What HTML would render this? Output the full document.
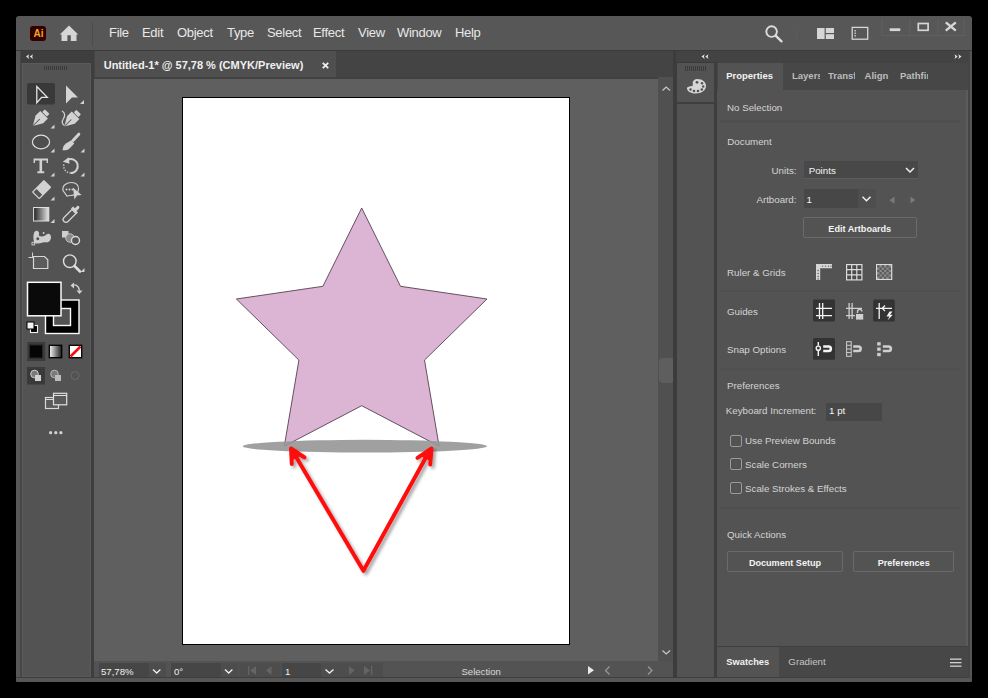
<!DOCTYPE html>
<html><head><meta charset="utf-8">
<style>
*{margin:0;padding:0;box-sizing:border-box}
html,body{width:988px;height:698px;overflow:hidden;background:#000}
body{position:relative;font-family:"Liberation Sans",sans-serif;color:#ddd}
.a{position:absolute}
svg{position:absolute;overflow:visible}
.win{left:16px;top:16px;width:956px;height:666px;background:#575757;border-radius:3px 3px 1px 1px;overflow:hidden}
.mt{font-size:13px;color:#e8e8e8;top:25px;line-height:15px;letter-spacing:-0.3px}
.pt{font-size:10px;color:#d6d6d6;line-height:12px}
.btn{border:1px solid #6a6a6a;background:#535353;border-radius:2px;font-size:10px;color:#f0f0f0;text-align:center;line-height:19px}
.tri{width:0;height:0;border-left:4px solid transparent;border-bottom:4px solid #d0d0d0}
.cb{width:12px;height:12px;border:1px solid #9a9a9a;border-radius:2px}
</style></head><body>
<div class="a win"></div>

<!-- MENU BAR -->
<div class="a" style="left:16px;top:50px;width:956px;height:1px;background:#3a3a3a"></div>

<!-- Ai logo -->
<div class="a" style="left:30px;top:26px;width:16px;height:14.5px;background:#330000;border-radius:3px"></div>
<div class="a" style="left:31px;top:27px;width:15px;height:13px;font-size:10px;line-height:13px;font-weight:bold;color:#f5a623;text-align:center">Ai</div>
<!-- home icon -->
<svg style="left:59px;top:24px" width="20" height="18" viewBox="0 0 20 18"><path d="M10 1.5 L19.2 10.5 L17.5 10.5 L17.5 17 L11.8 17 L11.8 11.2 L8.4 11.2 L8.4 17 L2.5 17 L2.5 10.5 L0.8 10.5 Z" fill="#d6d6d6"/></svg>
<div class="a" style="left:92px;top:22px;width:1px;height:24px;background:#4c4c4c"></div>

<div class="a mt" style="left:109px">File</div>
<div class="a mt" style="left:142px">Edit</div>
<div class="a mt" style="left:177px">Object</div>
<div class="a mt" style="left:227px">Type</div>
<div class="a mt" style="left:267px">Select</div>
<div class="a mt" style="left:313px">Effect</div>
<div class="a mt" style="left:358px">View</div>
<div class="a mt" style="left:397px">Window</div>
<div class="a mt" style="left:455px">Help</div>

<!-- TOOLBAR FRAME -->
<div class="a" style="left:20px;top:51px;width:74px;height:627px;background:#474747"></div>
<div class="a" style="left:21px;top:51px;width:72px;height:12px;background:#3e3e3e"></div>
<div class="a" style="left:22px;top:63px;width:69px;height:614px;background:#5a5a5a"></div>
<div class="a" style="left:23px;top:64px;width:67px;height:612px;background:#535353"></div>
<div class="a" style="left:91px;top:51px;width:3px;height:627px;background:#3e3e3e"></div>


<!-- TOOL ICONS -->
<svg style="left:0;top:0" width="988" height="698">
<g fill="#d2d2d2">
<!-- toolbar header chevrons -->
<path d="M26 56.6 L29.2 54.2 L28.4 56.6 L29.2 59 Z M29.8 56.6 L33 54.2 L32.2 56.6 L33 59 Z" fill="#e4e4e4"/>
<!-- gripper -->
<g fill="#3a3a3a"><rect x="44" y="66" width="1" height="4"/><rect x="46" y="66" width="1" height="4"/><rect x="48" y="66" width="1" height="4"/><rect x="50" y="66" width="1" height="4"/><rect x="52" y="66" width="1" height="4"/><rect x="54" y="66" width="1" height="4"/><rect x="56" y="66" width="1" height="4"/><rect x="58" y="66" width="1" height="4"/><rect x="60" y="66" width="1" height="4"/><rect x="62" y="66" width="1" height="4"/><rect x="64" y="66" width="1" height="4"/><rect x="66" y="66" width="1" height="4"/></g>
<!-- row1 -->
<rect x="27" y="83" width="28" height="21.5" rx="2" fill="#393939"/>
<path d="M36.8 86.5 L47.3 97.3 L41.6 97.3 L36.8 102.8 Z" fill="none" stroke="#e4e4e4" stroke-width="1.3" stroke-linejoin="miter"/>
<path d="M66 85.5 L78 97.5 L72 97.5 L66 103.5 Z" fill="#d4d4d4"/>
<path d="M84 100 L84 104 L80 104 Z"/>
<!-- row2 pen -->
<g transform="translate(39.8 119) rotate(45) scale(1.1)"><rect x="-3" y="-9.5" width="6" height="3.4" rx="0.8"/><path d="M-4.9 -5.5 L4.9 -5.5 L4.9 0.5 L0 9 L-4.9 0.5 Z"/><path d="M0 0 L0 9" stroke="#535353" stroke-width="0.9"/></g>
<path d="M54.5 124.5 L54.5 128.5 L50.5 128.5 Z"/>
<g transform="translate(71.3 119.5) rotate(45) scale(1.1)"><rect x="-3" y="-9.5" width="6" height="3.4" rx="0.8"/><path d="M-4.9 -5.5 L4.9 -5.5 L4.9 0.5 L0 9 L-4.9 0.5 Z"/><path d="M0 0 L0 9" stroke="#535353" stroke-width="0.9"/></g>
<path d="M62 111 C65.5 113 65 116 63.5 118.5 C61.5 121.5 62 124.5 64.5 125.5" fill="none" stroke="#d2d2d2" stroke-width="1.3"/>
<!-- row3 ellipse -->
<ellipse cx="41" cy="142" rx="8.6" ry="6.8" fill="#4e4e4e" stroke="#dedede" stroke-width="1.2"/>
<path d="M54.5 148.5 L54.5 152.5 L50.5 152.5 Z"/>
<!-- brush -->
<path d="M78.8 134.2 L73 140.5" stroke="#d2d2d2" stroke-width="3" stroke-linecap="round"/>
<path d="M71.2 140.3 L74.3 143.4 L69.5 148.5 C67.5 150.3 64.5 150.5 62.5 150.3 C62.7 148 63.5 145.5 65.5 143.8 Z"/>
<path d="M84.5 148.5 L84.5 152.5 L80.5 152.5 Z"/>
<!-- row4 T -->
<path d="M33.6 158.6 H48 V163 H46.6 V160.6 H42.1 V171.3 H44.2 V173.2 H37.4 V171.3 H39.5 V160.6 H35 V163 H33.6 Z"/>
<path d="M54.5 172.5 L54.5 176.5 L50.5 176.5 Z"/>
<!-- rotate -->
<path d="M67.5 159.8 A7 7 0 1 1 70.8 173" fill="none" stroke="#d2d2d2" stroke-width="2"/>
<path d="M70.8 173 A7 7 0 0 1 64 164" fill="none" stroke="#d2d2d2" stroke-width="1.6" stroke-dasharray="1.3 1.5"/>
<path d="M62.8 161.8 L68.8 157.2 L69.5 163.8 Z"/>
<path d="M84.5 172.5 L84.5 176.5 L80.5 176.5 Z"/>
<!-- row5 eraser -->
<g transform="translate(41.6 189.6) rotate(45)"><rect x="-5.3" y="-8.6" width="10.6" height="17.2" rx="1" fill="#d2d2d2"/><rect x="-4" y="3.2" width="8" height="4.2" fill="#555"/></g>
<path d="M54.5 196.5 L54.5 200.5 L50.5 200.5 Z"/>
<!-- shaper -->
<path d="M63 190.5 C62 185 67 182.5 71.5 182.5 C76 182.5 79 185 78.5 189.5 C78 194 74 195.5 70 195.5 L67 196 Z" fill="none" stroke="#d2d2d2" stroke-width="1.2"/>
<circle cx="66.5" cy="189.5" r="1"/><circle cx="69.5" cy="189.5" r="1"/><circle cx="72.5" cy="189.5" r="1"/>
<path d="M73 187.5 L81.6 195 L77 195.5 L74.5 199.5 Z"/>
<!-- row6 gradient -->
<defs><linearGradient id="g1" x1="0" x2="1"><stop offset="0" stop-color="#222"/><stop offset="1" stop-color="#e8e8e8"/></linearGradient>
<linearGradient id="g2" x1="0" x2="1"><stop offset="0" stop-color="#fafafa"/><stop offset="1" stop-color="#1a1a1a"/></linearGradient></defs>
<rect x="33.6" y="207.5" width="15.2" height="13.5" fill="url(#g1)" stroke="#e0e0e0" stroke-width="1"/>
<path d="M54.5 219 L54.5 223 L50.5 223 Z"/>
<!-- eyedropper -->
<path d="M64 221.5 C62.5 220 63 218.5 64 217.5 L72 209.5 L76 213.5 L68 221.5 C67 222.5 65.5 223 64 221.5 Z" fill="none" stroke="#d2d2d2" stroke-width="1.3"/>
<path d="M71 208.5 L76.5 214 L78 212.5 L76.5 211 L79 208.5 C80 207.5 79 205.5 77.5 205.8 L75 208.3 L73 206.5 Z"/>
<!-- row7 puppet warp -->
<path d="M34.2 243 C33 238 33 232 35.8 231 C38.5 230.2 39.8 233 38.8 235.8 C41.5 237 44.5 236.5 46.5 234.5 C48.5 232.8 51.2 234 51 237.5 C50.8 241 48.5 243 45.5 242.3 C42.5 241.8 40.5 243.5 38 243.5 C36.5 243.5 35 243.5 34.2 243 Z" fill="#cfcfcf"/>
<path d="M39.5 232 L42 235" stroke="#535353" stroke-width="0.8"/>
<circle cx="43.6" cy="233" r="1" fill="#cfcfcf"/>
<circle cx="37.8" cy="238.8" r="2" fill="#535353" stroke="#d2d2d2" stroke-width="1"/>
<path d="M34.5 242 L36.5 240" stroke="#cfcfcf" stroke-width="0.9"/>
<rect x="32" y="242.3" width="2.6" height="2.6" fill="#535353" stroke="#d2d2d2" stroke-width="0.9"/>
<!-- shape builder -->
<rect x="62" y="231" width="6.5" height="6.5" fill="#cfcfcf"/>
<circle cx="70" cy="238" r="4.3" fill="#8a8a8a" stroke="#d2d2d2" stroke-width="0.8"/>
<circle cx="75.5" cy="240.5" r="4" fill="#535353" stroke="#dcdcdc" stroke-width="1.4"/>
<!-- row8 artboard -->
<path d="M28.5 257.5 H34 M32.5 252.5 V258" stroke="#cfcfcf" stroke-width="1" fill="none"/>
<path d="M33.5 256.5 H44.5 L47.8 259.8 V268.5 H33.5 Z" fill="#5c5c5c" stroke="#d8d8d8" stroke-width="1.2"/>
<!-- zoom -->
<circle cx="69.8" cy="261.2" r="6.3" fill="none" stroke="#dcdcdc" stroke-width="1.4"/>
<path d="M74.5 266 L80 271.5" stroke="#dcdcdc" stroke-width="2.6" stroke-linecap="round"/>
<path d="M84.5 268 L84.5 272 L80.5 272 Z"/>
<!-- fill stroke -->
<rect x="45.5" y="300" width="33.5" height="33.5" fill="#000" stroke="#fafafa" stroke-width="1.4"/>
<rect x="53.5" y="308.5" width="17" height="17" fill="#535353" stroke="#fafafa" stroke-width="1.4"/>
<rect x="27.5" y="282.3" width="33.5" height="33.5" fill="#0a0a0a" stroke="#fafafa" stroke-width="1.5"/>
<path d="M72 285.5 C75 284 78.5 285 79.5 290.5" fill="none" stroke="#cfcfcf" stroke-width="1.4"/>
<path d="M70.5 285.5 L74 282.5 L74 288.5 Z M79.5 294 L76.5 290.5 L82.5 290.5 Z"/>
<rect x="30.5" y="325.5" width="7" height="7" fill="#000" stroke="#f0f0f0" stroke-width="1.1"/>
<rect x="27" y="322" width="7" height="7" fill="#f4f4f4" stroke="#000" stroke-width="1"/>
<!-- color gradient none -->
<rect x="27.3" y="342" width="18" height="19" fill="#3b3b3b"/>
<rect x="29.5" y="345" width="13" height="13" fill="#050505" stroke="#262626" stroke-width="1"/>
<rect x="49.3" y="345.3" width="12.4" height="12.4" fill="url(#g2)" stroke="#000" stroke-width="1.3"/>
<rect x="69.3" y="345.3" width="12.4" height="12.4" fill="#fff" stroke="#000" stroke-width="1.3"/>
<path d="M70.5 356.5 L80.5 346.5" stroke="#f01010" stroke-width="2.6"/>
<!-- draw modes -->
<rect x="27" y="367" width="18" height="17.5" fill="#3a3a3a"/>
<circle cx="34.5" cy="374" r="3.8" fill="#7a7a7a" stroke="#cfcfcf" stroke-width="1"/>
<rect x="35" y="375" width="6" height="6" fill="#d2d2d2"/>
<circle cx="54.5" cy="374" r="3.8" fill="#7a7a7a" stroke="#b8b8b8" stroke-width="1"/>
<rect x="55" y="375" width="6" height="6" fill="#bcbcbc"/>
<circle cx="75" cy="375.5" r="4" fill="none" stroke="#6a6a6a" stroke-width="1"/>
<!-- screen mode -->
<rect x="45.5" y="397.5" width="13" height="11" fill="#5a5a5a" stroke="#d8d8d8" stroke-width="1.2"/>
<path d="M45.5 399.5 H58.5" stroke="#d8d8d8" stroke-width="1"/>
<rect x="53.5" y="393.3" width="13.2" height="11.5" fill="#5a5a5a" stroke="#e0e0e0" stroke-width="1.2"/>
<path d="M53.5 395.5 H66.7" stroke="#e0e0e0" stroke-width="1"/>
<circle cx="50.6" cy="432.7" r="1.6"/><circle cx="55.8" cy="432.7" r="1.6"/><circle cx="60.9" cy="432.7" r="1.6"/>
</g>
</svg>

<!-- TAB BAR -->
<div class="a" style="left:94px;top:51px;width:579px;height:28px;background:#444444"></div>
<div class="a" style="left:95px;top:51px;width:241px;height:26px;background:#4f4f4f"></div>
<div class="a" style="left:94px;top:77px;width:579px;height:2px;background:#414141"></div>
<div class="a" style="left:103.7px;top:59px;font-size:11px;font-weight:bold;color:#f0f0f0;line-height:13px">Untitled-1* @ 57,78 % (CMYK/Preview)</div>
<svg style="left:322px;top:62px" width="7" height="7"><path d="M0.8 0.8 L6.2 6.2 M6.2 0.8 L0.8 6.2" stroke="#f0f0f0" stroke-width="1.8"/></svg>

<!-- CANVAS -->
<div class="a" style="left:94px;top:79px;width:564px;height:582px;background:#5f5f5f"></div>
<div class="a" style="left:182px;top:97px;width:388px;height:548px;background:#fff;border:1px solid #000"></div>

<!-- ARTWORK -->
<svg style="left:0;top:0" width="988" height="698">
<defs><filter id="sh" x="-20%" y="-20%" width="140%" height="140%"><feDropShadow dx="2.5" dy="2.5" stdDeviation="1.6" flood-color="#000" flood-opacity="0.35"/></filter></defs>
<path d="M361.7 208.0 L400.5 286.3 L487.0 299.0 L424.5 360.1 L439.1 446.2 L361.7 405.7 L284.3 446.2 L298.9 360.1 L236.4 299.0 L322.9 286.3 Z" fill="#dcb4d4" stroke="#54424f" stroke-width="0.9" stroke-linejoin="miter"/>
<ellipse cx="364.8" cy="446.2" rx="122" ry="6.4" fill="#969696" fill-opacity="0.9"/>
<g filter="url(#sh)" fill="none" stroke="#ff1010" stroke-width="4" stroke-linecap="round" stroke-linejoin="round">
<path d="M292 450 L363.4 570.8 L430 450"/>
<path d="M291.8 464 L291 448.5 L304.5 457.5"/>
<path d="M417.5 457.8 L431.5 448.5 L430.2 464.5"/>
<path d="M291.5 449.5 L292 459 L300 455 Z M430.8 449.5 L421.5 455.5 L429.8 459.5 Z" fill="#ff1010" stroke-width="2"/>
</g>
</svg>

<!-- v scrollbar -->
<div class="a" style="left:658px;top:77px;width:15.5px;height:584px;background:#505050"></div><div class="a" style="left:659px;top:358px;width:14.5px;height:24.7px;background:#5e5e5e;border-radius:4px"></div>
<div class="a" style="left:673px;top:51px;width:3.5px;height:627px;background:#3c3c3c"></div>

<!-- STATUS BAR -->
<div class="a" style="left:94px;top:661px;width:579px;height:16px;background:#535353"></div>
<div class="a" style="left:16px;top:677px;width:955px;height:1px;background:#3e3e3e"></div>

<!-- COLLAPSED PANEL COLUMN -->
<div class="a" style="left:676px;top:51px;width:292px;height:12px;background:#434343"></div><div class="a" style="left:676px;top:62px;width:292px;height:1px;background:#3a3a3a"></div>
<div class="a" style="left:677px;top:63px;width:37px;height:614px;background:#535353"></div>
<div class="a" style="left:677px;top:102px;width:37px;height:2px;background:#3e3e3e"></div>
<div class="a" style="left:714px;top:63px;width:3px;height:615px;background:#3e3e3e"></div>

<!-- RIGHT PANEL -->
<div class="a" style="left:717px;top:51px;width:251px;height:12px;background:#434343"></div>
<div class="a" style="left:717px;top:63px;width:251px;height:27px;background:#474747"></div>
<div class="a" style="left:718px;top:63px;width:65px;height:27px;background:#535353"></div>
<div class="a" style="left:717px;top:90px;width:251px;height:556px;background:#535353"></div>
<div class="a" style="left:717px;top:646px;width:251px;height:31px;background:#474747"></div><div class="a" style="left:717px;top:645.5px;width:251px;height:1.5px;background:#3f3f3f"></div>
<div class="a" style="left:717px;top:647px;width:62px;height:30px;background:#535353"></div>
<div class="a" style="left:966px;top:90px;width:1.5px;height:556px;background:#5c5c5c"></div><div class="a" style="left:967.5px;top:51px;width:2px;height:627px;background:#454545"></div>

<!-- CHROME -->
<!-- CHROME ICONS -->
<svg style="left:0;top:0" width="988" height="698">
<!-- search -->
<circle cx="771.6" cy="31.6" r="5.3" fill="none" stroke="#dcdcdc" stroke-width="1.9"/>
<path d="M775.6 35.6 L781.5 41.3" stroke="#dcdcdc" stroke-width="2.4" stroke-linecap="round"/>
<rect x="796" y="29.5" width="1.2" height="10" fill="#5c5c5c"/>
<!-- workspace -->
<g fill="#d6d6d6"><rect x="817" y="28" width="7.6" height="11"/><rect x="825.8" y="28" width="8.2" height="5"/><rect x="825.8" y="34.2" width="8.2" height="4.8"/></g>
<!-- screen mode -->
<rect x="852.2" y="27.4" width="15.5" height="11.8" fill="none" stroke="#d6d6d6" stroke-width="1.3"/>
<g fill="#d6d6d6"><rect x="854.5" y="30" width="1.3" height="1.5"/><rect x="854.5" y="32.5" width="1.3" height="1.5"/><rect x="854.5" y="35" width="1.3" height="1.5"/></g>
<!-- window buttons -->
<g fill="none" stroke="#606060" stroke-width="1">
<path d="M882 19 V35.5 H964 V19"/><path d="M909.8 19 V35.5 M938 19 V35.5"/>
</g>
<rect x="889.7" y="28.3" width="10.6" height="2.8" fill="#d6d6d6"/>
<rect x="918.3" y="23.5" width="9.8" height="6.8" fill="none" stroke="#d6d6d6" stroke-width="1.7"/>
<path d="M945.8 22.3 L955.8 30.7 M955.8 22.3 L945.8 30.7" stroke="#d6d6d6" stroke-width="2.4"/>
<!-- v scrollbar chevrons -->
<path d="M662.5 90.5 L666.2 87 L670 90.5" fill="none" stroke="#c8c8c8" stroke-width="1.2"/>
<path d="M662.5 650.5 L666.2 654 L670 650.5" fill="none" stroke="#c8c8c8" stroke-width="1.2"/>
<!-- collapsed panel gripper & palette -->
<g fill="#3a3a3a"><rect x="685" y="66" width="1" height="5"/><rect x="687" y="66" width="1" height="5"/><rect x="689" y="66" width="1" height="5"/><rect x="691" y="66" width="1" height="5"/><rect x="693" y="66" width="1" height="5"/><rect x="695" y="66" width="1" height="5"/><rect x="697" y="66" width="1" height="5"/><rect x="699" y="66" width="1" height="5"/><rect x="701" y="66" width="1" height="5"/><rect x="703" y="66" width="1" height="5"/><rect x="705" y="66" width="1" height="5"/></g>
<path d="M697 79 C703 79 706 82.5 706 86 C706 90 702 93.5 695.5 93.5 C690.5 93.5 687 91 687 88.5 C687 86.5 690 86.5 692 86 C694 85.5 692 83 693 81.5 C693.8 80 695 79 697 79 Z" fill="#d6d6d6"/>
<g fill="#535353"><circle cx="690.5" cy="89.5" r="1.3"/><circle cx="694" cy="91" r="1.3"/><circle cx="698" cy="91" r="1.3"/><circle cx="701.8" cy="89.5" r="1.3"/><circle cx="703.2" cy="86.5" r="1.2"/><circle cx="702" cy="83.2" r="1.2"/><circle cx="697" cy="82.3" r="1.4"/></g>
</svg>

<!-- STATUS BAR CONTENT -->
<div class="a" style="left:99px;top:663px;width:49.5px;height:14px;background:#464646"></div>
<div class="a" style="left:148.5px;top:663px;width:17.5px;height:14px;background:#4d4d4d"></div>
<div class="a" style="left:171px;top:663px;width:50px;height:14px;background:#464646"></div>
<div class="a" style="left:221px;top:663px;width:17px;height:14px;background:#4d4d4d"></div>
<div class="a" style="left:239px;top:663px;width:42px;height:14px;background:#4d4d4d"></div><div class="a" style="left:338px;top:663px;width:45px;height:14px;background:#4d4d4d"></div>
<div class="a" style="left:282px;top:663px;width:39px;height:14px;background:#464646"></div>
<div class="a" style="left:321px;top:663px;width:17px;height:14px;background:#4d4d4d"></div>
<div class="a" style="left:101px;top:665.6px;font-size:9.6px;line-height:12px;color:#f0f0f0">57,78%</div>
<div class="a" style="left:174px;top:665.6px;font-size:9.6px;line-height:12px;color:#f0f0f0">0°</div>
<div class="a" style="left:285px;top:665.6px;font-size:9.6px;line-height:12px;color:#f0f0f0">1</div>
<div class="a" style="left:461.4px;top:665.6px;font-size:9.6px;line-height:12px;color:#d8d8d8">Selection</div>
<svg style="left:0;top:0" width="988" height="698">
<g fill="none" stroke="#eeeeee" stroke-width="1.4">
<path d="M153 669.5 L156.7 673 L160.4 669.5"/>
<path d="M225 669.5 L228.7 673 L232.4 669.5"/>
<path d="M325.5 669.5 L329.5 673 L333.5 669.5"/>
</g>
<g fill="#646464">
<rect x="248" y="666" width="1.3" height="9"/><path d="M256 666 L250 670.5 L256 675 Z"/>
<path d="M271.5 666 L266 670.5 L271.5 675 Z"/>
<path d="M349 666 L354.7 670.5 L349 675 Z"/>
<path d="M364 666 L370 670.5 L364 675 Z"/><rect x="371" y="666" width="1.3" height="9"/>
</g>
<path d="M588 666 L594 670.2 L588 674.4 Z" fill="#e8e8e8"/>
<g fill="none" stroke="#9a9a9a" stroke-width="1.2">
<path d="M609.5 666.5 L605.5 670.5 L609.5 674.5"/>
<path d="M648 666.5 L652 670.5 L648 674.5"/>
</g>
</svg>

<!-- /CHROME -->
<!-- PANEL CONTENT -->
<svg style="left:0;top:0" width="988" height="698"><g fill="#dcdcdc"><path d="M701.5 56.6 L704.7 54.2 L703.9 56.6 L704.7 59 Z M705.3 56.6 L708.5 54.2 L707.7 56.6 L708.5 59 Z" fill="#e4e4e4"/><path d="M961.5 56.6 L958.3 54.2 L959.1 56.6 L958.3 59 Z M957.7 56.6 L954.5 54.2 L955.3 56.6 L954.5 59 Z" fill="#e4e4e4"/></g></svg>
<div class="a" style="left:726.3px;top:69.73px;font-size:9.45px;line-height:12px;color:#f2f2f2;white-space:nowrap;font-weight:bold;">Properties</div>
<div class="a" style="left:792px;top:66px;width:27.5px;height:18px;overflow:hidden"><div class="a" style="left:0px;top:3.71px;font-size:9.5px;line-height:12px;color:#bdbdbd;white-space:nowrap;font-weight:bold;">Layers</div></div>
<div class="a" style="left:828px;top:66px;width:27px;height:18px;overflow:hidden"><div class="a" style="left:0px;top:3.71px;font-size:9.5px;line-height:12px;color:#bdbdbd;white-space:nowrap;font-weight:bold;">Transform</div></div>
<div class="a" style="left:864.6px;top:69.71px;font-size:9.5px;line-height:12px;color:#bdbdbd;white-space:nowrap;font-weight:bold;">Align</div>
<div class="a" style="left:900px;top:66px;width:27.5px;height:18px;overflow:hidden"><div class="a" style="left:0px;top:3.71px;font-size:9.5px;line-height:12px;color:#bdbdbd;white-space:nowrap;font-weight:bold;">Pathfinder</div></div>
<div class="a" style="left:727px;top:101.62px;font-size:9.75px;line-height:12px;color:#d4d4d4;white-space:nowrap;">No Selection</div>
<div class="a" style="left:720px;top:120px;width:240px;height:3px;background:#4f4f4f"></div>
<div class="a" style="left:727.3px;top:136.42px;font-size:9.75px;line-height:12px;color:#d4d4d4;white-space:nowrap;">Document</div>
<div class="a" style="left:596.5px;width:200px;text-align:right;top:164.72px;font-size:9.75px;line-height:12px;color:#d4d4d4;white-space:nowrap;">Units:</div>
<div class="a" style="left:803.5px;top:160.5px;width:114px;height:18.5px;background:#484848;border-bottom:1px solid #5c5c5c"></div>
<div class="a" style="left:808.7px;top:164.72px;font-size:9.75px;line-height:12px;color:#f4f4f4;white-space:nowrap;">Points</div>
<div class="a" style="left:596.5px;width:200px;text-align:right;top:193.92px;font-size:9.75px;line-height:12px;color:#d4d4d4;white-space:nowrap;">Artboard:</div>
<div class="a" style="left:803.5px;top:188.7px;width:55px;height:19px;background:#474747"></div>
<div class="a" style="left:858.4px;top:188.7px;width:17.5px;height:19px;background:#4e4e4e"></div>
<div class="a" style="left:806.5px;top:193.92px;font-size:9.75px;line-height:12px;color:#f4f4f4;white-space:nowrap;">1</div>
<div class="a btn" style="left:802.5px;top:217px;width:114.5px;height:20.5px"></div>
<div class="a" style="left:802.5px;width:114.5px;text-align:center;top:222.85px;font-size:9.1px;line-height:12px;color:#f4f4f4;white-space:nowrap;font-weight:bold;">Edit Artboards</div>
<div class="a" style="left:727px;top:266.52px;font-size:9.75px;line-height:12px;color:#d4d4d4;white-space:nowrap;">Ruler &amp; Grids</div>
<div class="a" style="left:720px;top:290px;width:240px;height:2px;background:#4f4f4f"></div>
<div class="a" style="left:727px;top:305.92px;font-size:9.75px;line-height:12px;color:#d4d4d4;white-space:nowrap;">Guides</div>
<div class="a" style="left:727px;top:343.62px;font-size:9.75px;line-height:12px;color:#d4d4d4;white-space:nowrap;">Snap Options</div>
<div class="a" style="left:720px;top:368px;width:240px;height:2px;background:#505050"></div>
<div class="a" style="left:727px;top:379.62px;font-size:9.75px;line-height:12px;color:#d4d4d4;white-space:nowrap;">Preferences</div>
<div class="a" style="left:725.8px;top:405.12px;font-size:9.75px;line-height:12px;color:#d4d4d4;white-space:nowrap;">Keyboard Increment:</div>
<div class="a" style="left:825.8px;top:402.6px;width:56.6px;height:18px;background:#474747"></div>
<div class="a" style="left:829px;top:405.12px;font-size:9.75px;line-height:12px;color:#f4f4f4;white-space:nowrap;">1 pt</div>
<div class="a cb" style="left:729.7px;top:434.5px"></div>
<div class="a" style="left:745px;top:434.92px;font-size:9.75px;line-height:12px;color:#d4d4d4;white-space:nowrap;">Use Preview Bounds</div>
<div class="a cb" style="left:729.7px;top:458.3px"></div>
<div class="a" style="left:745px;top:458.72px;font-size:9.75px;line-height:12px;color:#d4d4d4;white-space:nowrap;">Scale Corners</div>
<div class="a cb" style="left:729.7px;top:482.4px"></div>
<div class="a" style="left:745px;top:482.82px;font-size:9.75px;line-height:12px;color:#d4d4d4;white-space:nowrap;">Scale Strokes &amp; Effects</div>
<div class="a" style="left:720px;top:507px;width:240px;height:2px;background:#4f4f4f"></div>
<div class="a" style="left:727px;top:528.82px;font-size:9.75px;line-height:12px;color:#d4d4d4;white-space:nowrap;">Quick Actions</div>
<div class="a btn" style="left:727px;top:551.3px;width:116px;height:20.3px"></div>
<div class="a" style="left:727px;width:116px;text-align:center;top:556.85px;font-size:9.1px;line-height:12px;color:#f4f4f4;white-space:nowrap;font-weight:bold;">Document Setup</div>
<div class="a btn" style="left:853.4px;top:551.3px;width:100.6px;height:20.3px"></div>
<div class="a" style="left:853.4px;width:100.6px;text-align:center;top:556.85px;font-size:9.1px;line-height:12px;color:#f4f4f4;white-space:nowrap;font-weight:bold;">Preferences</div>
<div class="a" style="left:726.3px;top:655.68px;font-size:9.3px;line-height:12px;color:#f2f2f2;white-space:nowrap;font-weight:bold;">Swatches</div>
<div class="a" style="left:788.3px;top:655.52px;font-size:9.75px;line-height:12px;color:#c4c4c4;white-space:nowrap;">Gradient</div>
<svg style="left:0;top:0" width="988" height="698">
<g fill="none" stroke="#f0f0f0" stroke-width="1.5">
<!-- dropdown chevrons -->
<path d="M906 168 L910 172 L914 168"/>
<path d="M862.5 196.8 L866.5 200.8 L870.5 196.8"/>
</g>
<g fill="#7a7a7a">
<path d="M889.5 200.2 L894.5 196.5 L894.5 203.8 Z"/>
<path d="M915.5 200 L910.5 196.5 L910.5 203.5 Z"/>
</g>
<!-- ruler -->
<g fill="#d6d6d6">
<path d="M816 264 H832 V268.2 H820.2 V280 H816 Z"/>
</g>
<g fill="#555">
<circle cx="822.5" cy="266.1" r="0.7"/><circle cx="825.5" cy="266.1" r="0.7"/><circle cx="828.5" cy="266.1" r="0.7"/><circle cx="831" cy="266.1" r="0.7"/>
<circle cx="818.1" cy="270.5" r="0.7"/><circle cx="818.1" cy="273.5" r="0.7"/><circle cx="818.1" cy="276.5" r="0.7"/><circle cx="818.1" cy="279" r="0.7"/>
</g>
<!-- grid -->
<rect x="846.5" y="264.5" width="15.5" height="15.5" fill="#4a4a4a"/>
<g fill="none" stroke="#dcdcdc" stroke-width="1.2">
<rect x="846.6" y="264.6" width="15.3" height="15.3"/>
<path d="M851.7 264.6 V279.9 M856.8 264.6 V279.9 M846.6 269.7 H861.9 M846.6 274.8 H861.9"/>
</g>
<!-- transparency -->
<rect x="876" y="264" width="16.3" height="16" fill="#dadada"/>
<rect x="877.2" y="265.2" width="13.9" height="13.6" fill="#8a8a8a"/>
<g fill="#5a5a5a">
<rect x="877.2" y="265.2" width="2.3" height="2.3"/><rect x="881.8" y="265.2" width="2.3" height="2.3"/><rect x="886.4" y="265.2" width="2.3" height="2.3"/>
<rect x="879.5" y="267.5" width="2.3" height="2.3"/><rect x="884.1" y="267.5" width="2.3" height="2.3"/><rect x="888.7" y="267.5" width="2.3" height="2.3"/>
<rect x="877.2" y="269.8" width="2.3" height="2.3"/><rect x="881.8" y="269.8" width="2.3" height="2.3"/><rect x="886.4" y="269.8" width="2.3" height="2.3"/>
<rect x="879.5" y="272.1" width="2.3" height="2.3"/><rect x="884.1" y="272.1" width="2.3" height="2.3"/><rect x="888.7" y="272.1" width="2.3" height="2.3"/>
<rect x="877.2" y="274.4" width="2.3" height="2.3"/><rect x="881.8" y="274.4" width="2.3" height="2.3"/><rect x="886.4" y="274.4" width="2.3" height="2.3"/>
<rect x="879.5" y="276.7" width="2.3" height="2.1"/><rect x="884.1" y="276.7" width="2.3" height="2.1"/><rect x="888.7" y="276.7" width="2.3" height="2.1"/>
</g>
<!-- guides -->
<rect x="813" y="299.5" width="22" height="22" rx="1.5" fill="#333"/>
<rect x="873.2" y="299.5" width="21.6" height="22" rx="1.5" fill="#333"/>
<g fill="none" stroke="#f4f4f4" stroke-width="1.3">
<path d="M819.5 303 V319 M822.7 303 V319 M816 308.3 H832 M816 315.6 H832"/>
<path d="M879.2 303 V319 M876 308.3 H892 M890 308.3 H882.5 M885 305.5 L882.2 308.3 L885 311.1"/>
</g>
<g fill="none" stroke="#cfcfcf" stroke-width="1.3">
<path d="M849.1 303 V319 M852.1 303 V319 M846 308.3 H862 M846 315.6 H855"/>
<path d="M857.5 313 V311.5 A2.2 2.2 0 0 1 861.9 311.5"/>
</g>
<rect x="856" y="314" width="7.2" height="5.6" fill="#cfcfcf"/>
<path d="M889.5 311.5 L886.5 316.5 L889.5 316.5 L887.5 320.5 L892.8 314.8 L890 314.8 L892.5 311.5 Z" fill="#f4f4f4"/>
<!-- snap -->
<rect x="813" y="338" width="22" height="21.7" rx="1.5" fill="#333"/>
<g fill="none" stroke="#f4f4f4" stroke-width="1.4">
<path d="M818.3 342 V345.8 M818.3 350.6 V356"/>
<circle cx="818.3" cy="348.2" r="2.1" fill="#333"/>
<path d="M823.2 346.5 H828.6 A2.25 2.25 0 0 1 828.6 351 H823.2" stroke-width="2.6"/>
</g>
<g fill="none" stroke="#cfcfcf" stroke-width="1">
<rect x="846.6" y="341.7" width="4.6" height="14.6"/>
<path d="M846.6 345.3 H851.2 M846.6 349 H851.2 M846.6 352.6 H851.2"/>
<path d="M853.2 346.5 H858.4 A2.25 2.25 0 0 1 858.4 351 H853.2" stroke-width="2.6"/>
<path d="M882.8 346.5 H888.6 A2.25 2.25 0 0 1 888.6 351 H882.8" stroke-width="2.6"/>
</g>
<g fill="#cfcfcf"><rect x="877.2" y="342.2" width="3.5" height="3.3"/><rect x="877.2" y="347.5" width="3.5" height="3.3"/><rect x="877.2" y="352.9" width="3.5" height="3.3"/></g>
<!-- hamburger -->
<g fill="#d0d0d0"><rect x="950" y="658.5" width="11.5" height="1.3"/><rect x="950" y="662" width="11.5" height="1.3"/><rect x="950" y="665.5" width="11.5" height="1.3"/></g>
</svg>
<!-- /PANEL CONTENT -->
</body></html>
